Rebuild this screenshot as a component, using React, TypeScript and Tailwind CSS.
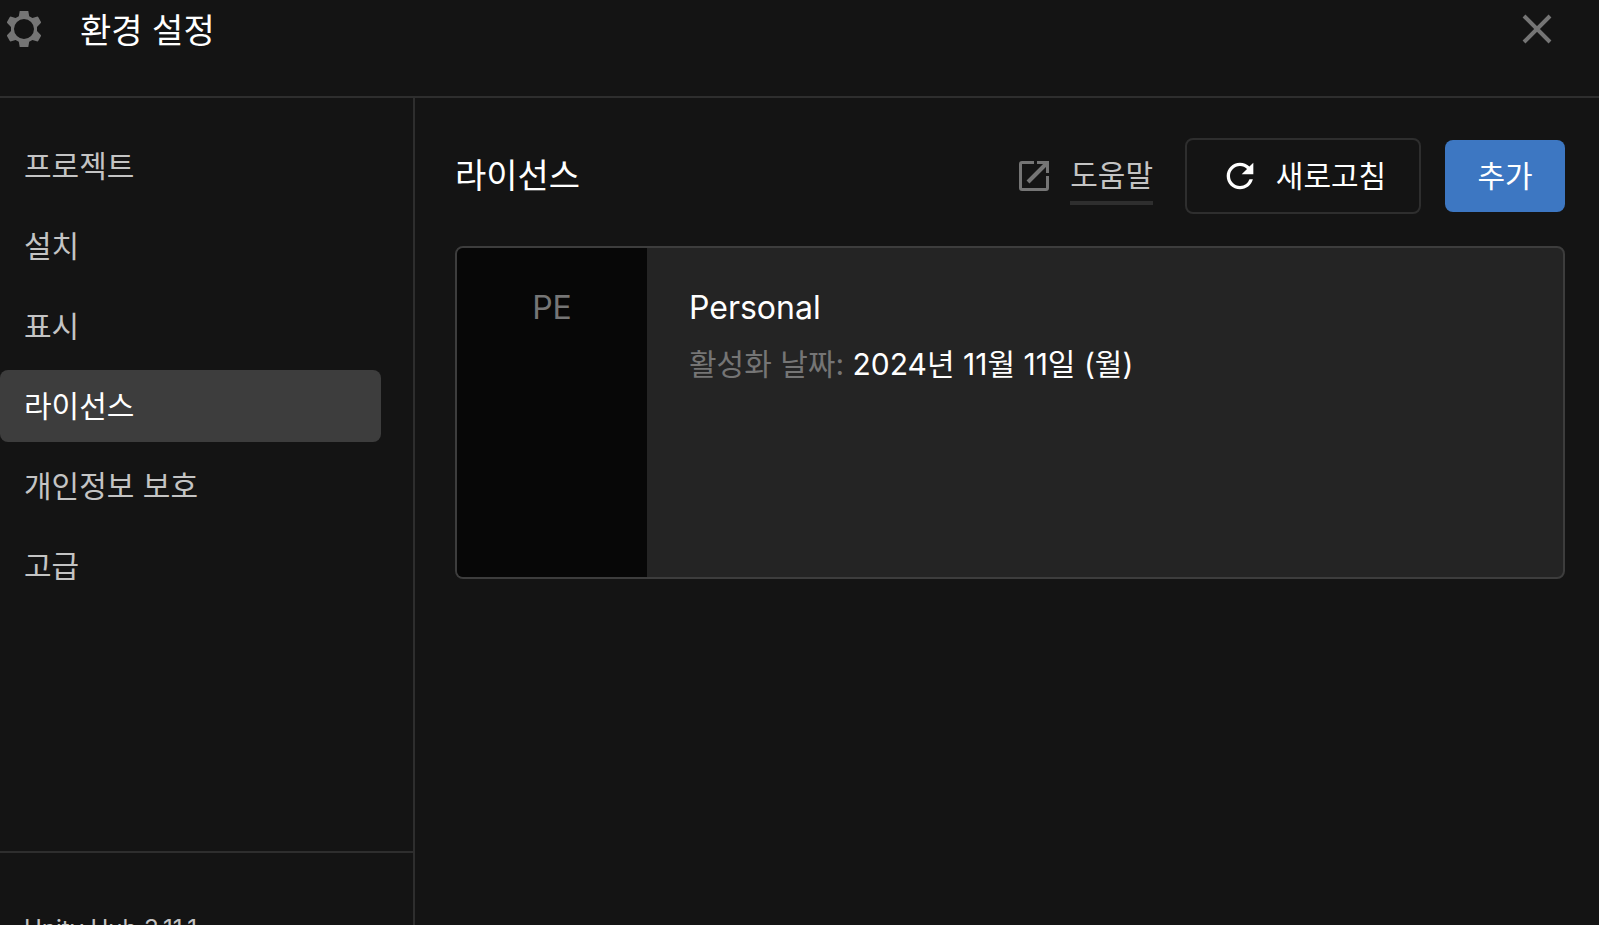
import { MdRefresh } from 'react-icons/md'

const MENU = ['프로젝트', '설치', '표시', '라이선스', '개인정보 보호', '고급']
const ACTIVE = '라이선스'

function GearIcon() {
  return (
    <svg className="size-12" viewBox="0 0 48 48" aria-hidden="true">
      <path
        fill="#757575"
        fillRule="evenodd"
        d="M19.7 6h8.6l.9 5.2 3.2 1.9 5.1-1.6q.5 0 .7.4l2.8 5.2q.2.5-.2.9L37 22.1v3.8l3.8 4.1q.4.4.2.9l-2.8 5.2q-.2.4-.7.4l-5.1-1.6-3.2 1.9-.9 5.2h-8.6l-.9-5.2-3.2-1.9-5.1 1.6q-.5 0-.7-.4L7 30.9q-.2-.5.2-.9l3.8-4.1v-3.8L7.2 18q-.4-.4-.2-.9l2.8-5.2q.2-.4.7-.4l5.1 1.6 3.2-1.9zM24 14a10 10 0 1 0 0 20 10 10 0 0 0 0-20z"
      />
    </svg>
  )
}

function ExternalIcon() {
  return (
    <svg className="size-10 text-[#757575]" viewBox="0 0 40 40" fill="none" stroke="currentColor" strokeWidth={3} aria-hidden="true">
      <path d="M20 6.5H8A1.5 1.5 0 0 0 6.500 8v24A1.500 1.500 0 0 0 8 33.500h24a1.500 1.500 0 0 0 1.500-1.500V20" />
      <path d="M23 6.500h10.500V17" />
      <path d="M14 26 33 7" strokeWidth={4} />
    </svg>
  )
}

export default function App() {
  return (
    <div className="flex h-screen flex-col overflow-hidden bg-[#141414] font-['Inter','Noto_Sans_CJK_KR',sans-serif] text-[30px] leading-10 text-white">
      <header className="flex h-[98px] shrink-0 items-start border-b-2 border-[#2e2e2e] pt-[5px] pr-[38px]">
        <GearIcon />
        <h1 className="ml-8 grow text-[34px] leading-[52px]">환경 설정</h1>
        <button type="button" aria-label="닫기" className="size-12">
          <svg viewBox="0 0 48 48" fill="none" stroke="#757575" strokeWidth={4} aria-hidden="true">
            <path d="m11 11 26 26M37 11 11 37" />
          </svg>
        </button>
      </header>

      <div className="flex min-h-0 grow">
        <aside className="flex w-[415px] shrink-0 flex-col border-r-2 border-[#2e2e2e]">
          <nav className="flex grow flex-col gap-2 pt-8 pr-8">
            {MENU.map((label) => (
              <button
                key={label}
                type="button"
                aria-current={label === ACTIVE ? 'page' : undefined}
                className={`h-[72px] rounded-lg px-6 text-left ${label === ACTIVE ? 'bg-[#3d3d3d] text-white' : 'text-[#c4c4c4]'}`}
              >
                {label}
              </button>
            ))}
          </nav>
          <footer className="h-[74px] overflow-hidden border-t-2 border-[#2e2e2e] px-6 pt-[60px] text-2xl leading-8 text-[#c4c4c4]">Unity Hub 3.11.1</footer>
        </aside>

        <main className="min-w-0 grow pt-10 pr-[34px] pl-10">
          <div className="flex h-[76px] items-center">
            <h2 className="grow text-[34px]">라이선스</h2>
            <a href="#help" className="mr-8 flex items-center gap-4 text-[#c4c4c4]">
              <ExternalIcon />
              <span className="border-b-4 border-[#2e2e2e] pt-2 pb-1.5">도움말</span>
            </a>
            <button type="button" className="mr-6 flex h-[76px] w-[236px] items-center justify-center gap-4 rounded-lg border-2 border-[#2e2e2e]">
              <MdRefresh className="size-10" aria-hidden="true" />
              새로고침
            </button>
            <button type="button" className="h-[72px] w-[120px] rounded-lg bg-[#3d77c2]">추가</button>
          </div>

          <article className="mt-8 flex h-[333px] overflow-hidden rounded-lg border-2 border-[#3d3d3d] bg-[#242424]">
            <div className="w-[190px] shrink-0 bg-[#070707] pt-10 text-center text-[32px] text-[#757575]">PE</div>
            <div className="grow px-[42px] pt-10">
              <h3 className="text-[32px]">Personal</h3>
              <p className="mt-4">
                <span className="text-[#757575]">활성화 날짜:</span> <time dateTime="2024-11-11">2024년 11월 11일 (월)</time>
              </p>
            </div>
          </article>
        </main>
      </div>
    </div>
  )
}
